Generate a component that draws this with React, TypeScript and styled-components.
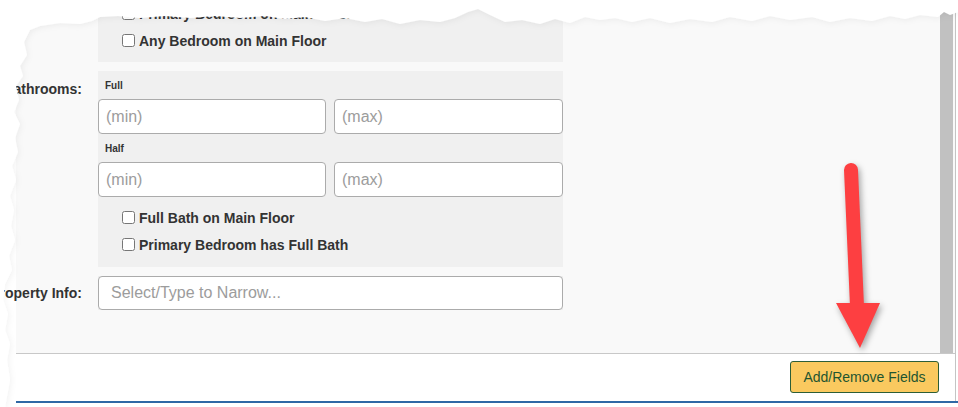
import React from "react";
import styled, { createGlobalStyle } from "styled-components";

const Global = createGlobalStyle`
  html, body { margin: 0; padding: 0; background: #ffffff; }
  body { font-family: "Liberation Sans", Arial, sans-serif; color: #333; }
  * { box-sizing: border-box; }
`;

const Page = styled.div`
  position: relative;
  width: 958px;
  height: 407px;
  overflow: hidden;
  background: #ffffff;
`;

const Frame = styled.div`
  margin-left: 16px;
  width: 942px;
  display: flex;
  flex-direction: column;
`;

const Card = styled.div`
  width: 940px;
  border-right: 1px solid #c4c4c4;
  display: flex;
  flex-direction: column;
`;

const ScrollArea = styled.div`
  height: 354px;
  display: flex;
  background: #f9f9f9;
  border-bottom: 1px solid #c8c8c8;
  overflow: visible;
`;

const Content = styled.div`
  width: 924px;
  display: flex;
  flex-direction: column;
  gap: 9px;
  margin-top: -6px;
`;

const Scrollbar = styled.div`
  width: 13px;
  margin-right: 2px;
  background: #c1c1c1;
`;

const Row = styled.div<{ $center?: boolean }>`
  display: flex;
  align-items: ${(p) => (p.$center ? "center" : "flex-start")};
  gap: 16px;
`;

const RowLabel = styled.div<{ $top?: number }>`
  width: 66px;
  flex: none;
  margin-top: ${(p) => p.$top ?? 0}px;
  display: flex;
  justify-content: flex-end;
  white-space: nowrap;
  font-size: 14px;
  font-weight: bold;
  line-height: 20px;
  color: #333;
`;

const Panel = styled.div<{ $pt?: number; $pb?: number }>`
  width: 465px;
  background: #f0f0f0;
  padding-top: ${(p) => p.$pt ?? 0}px;
  padding-bottom: ${(p) => p.$pb ?? 0}px;
  display: flex;
  flex-direction: column;
`;

const CheckRow = styled.label`
  height: 27px;
  display: flex;
  align-items: center;
  padding-left: 24px;
  font-size: 14px;
  font-weight: bold;
  color: #333;
  white-space: nowrap;
`;

const Box = styled.input.attrs({ type: "checkbox" })`
  width: 13px;
  height: 13px;
  margin: 0 4px 0 0;
`;

const SubLabel = styled.div`
  height: 28px;
  display: flex;
  align-items: center;
  padding-left: 7px;
  font-size: 10px;
  font-weight: bold;
  color: #333;
`;

const Pair = styled.div`
  display: grid;
  grid-template-columns: 228px 229px;
  gap: 8px;
`;

const TextInput = styled.input<{ $h?: number; $pl?: number }>`
  width: 100%;
  height: ${(p) => p.$h ?? 35}px;
  border: 1px solid #ababab;
  border-radius: 4px;
  background: #fff;
  padding: 0 0 0 ${(p) => p.$pl ?? 7}px;
  font-family: "Liberation Sans", Arial, sans-serif;
  font-size: 16px;
  color: #333;
  outline: none;
  &::placeholder { color: #9c9c9c; }
`;

const Checks = styled.div`
  margin-top: 7px;
  display: flex;
  flex-direction: column;
`;

const Footer = styled.div`
  height: 47px;
  display: flex;
  justify-content: flex-end;
  align-items: flex-start;
  padding: 7px 16px 0 0;
  background: #fff;
`;

const Button = styled.button`
  width: 149px;
  height: 32px;
  border: 1px solid #2c5e37;
  border-radius: 3px;
  background: #fac95f;
  color: #1e5530;
  font-family: "Liberation Sans", Arial, sans-serif;
  font-size: 14px;
  padding: 0;
`;

const BlueLine = styled.div`
  height: 2px;
  background: #2f68a5;
`;

const Overlay = styled.svg`
  position: absolute;
  left: 0;
  top: 0;
  pointer-events: none;
`;

const ArrowSvg = styled.svg`
  position: absolute;
  left: 820px;
  top: 150px;
  overflow: visible;
  filter: drop-shadow(2px 3px 3px rgba(0, 0, 0, 0.35));
`;

const TornEdge = () => (
  <Overlay width={958} height={407} viewBox="0 0 958 407">
    <defs>
      <filter id="tornShadow" x="-5%" y="-5%" width="110%" height="110%">
        <feDropShadow dx="1" dy="1" stdDeviation="3" floodColor="#000" floodOpacity="0.06" />
      </filter>
    </defs>
    <path
      filter="url(#tornShadow)"
      fill="#ffffff"
      d="M0 0 H958 V12 L950 15 L944 12 L938 17 L920 15 L905 19 L890 16 L872 21 L850 18 L830 22 L812 17 L790 20 L770 16 L752 21 L730 17 L712 22 L690 19 L670 23 L650 18 L632 22 L615 18 L600 20 L585 17 L570 23 L555 19 L540 24 L522 20 L505 22 L490 15 L478 9 L468 12 L455 18 L440 22 L420 20 L400 24 L382 19 L365 22 L345 18 L325 21 L305 17 L285 19 L265 16 L240 18 L215 16 L190 18 L165 16 L140 18 L118 16 L100 17 L92 21 L80 24 L60 23 L40 26 L30 30 L24 42 L27 55 L20 66 L23 76 L16 86 L19 100 L14 112 L20 124 L15 138 L18 152 L12 166 L16 180 L10 196 L14 210 L11 226 L15 240 L9 256 L12 270 L5 284 L3 300 L8 314 L5 330 L10 344 L7 360 L10 380 L5 407 H0 Z"
    />
  </Overlay>
);

const Arrow = () => (
  <ArrowSvg width={80} height={210} viewBox="0 0 80 210">
    <line x1={31} y1={20} x2={37} y2={156} stroke="#fd3f41" strokeWidth={14} strokeLinecap="round" />
    <polygon points="16,153 60,153 40,198" fill="#fd3f41" />
  </ArrowSvg>
);

export default function App() {
  return (
    <>
      <Global />
      <Page>
        <Frame>
          <Card>
            <ScrollArea>
              <Content>
                <Row>
                  <RowLabel />
                  <Panel $pt={6} $pb={8}>
                    <CheckRow>
                      <Box />
                      Primary Bedroom on Main Floor
                    </CheckRow>
                    <CheckRow>
                      <Box />
                      Any Bedroom on Main Floor
                    </CheckRow>
                  </Panel>
                </Row>
                <Row>
                  <RowLabel $top={8}>Bathrooms:</RowLabel>
                  <Panel $pb={9}>
                    <SubLabel>Full</SubLabel>
                    <Pair>
                      <TextInput placeholder="(min)" />
                      <TextInput placeholder="(max)" />
                    </Pair>
                    <SubLabel>Half</SubLabel>
                    <Pair>
                      <TextInput placeholder="(min)" />
                      <TextInput placeholder="(max)" />
                    </Pair>
                    <Checks>
                      <CheckRow>
                        <Box />
                        Full Bath on Main Floor
                      </CheckRow>
                      <CheckRow>
                        <Box />
                        Primary Bedroom has Full Bath
                      </CheckRow>
                    </Checks>
                  </Panel>
                </Row>
                <Row $center>
                  <RowLabel>Property Info:</RowLabel>
                  <Panel>
                    <TextInput $h={34} $pl={12} placeholder="Select/Type to Narrow..." />
                  </Panel>
                </Row>
              </Content>
              <Scrollbar />
            </ScrollArea>
            <Footer>
              <Button>Add/Remove Fields</Button>
            </Footer>
          </Card>
          <BlueLine />
        </Frame>
        <Arrow />
        <TornEdge />
      </Page>
    </>
  );
}
